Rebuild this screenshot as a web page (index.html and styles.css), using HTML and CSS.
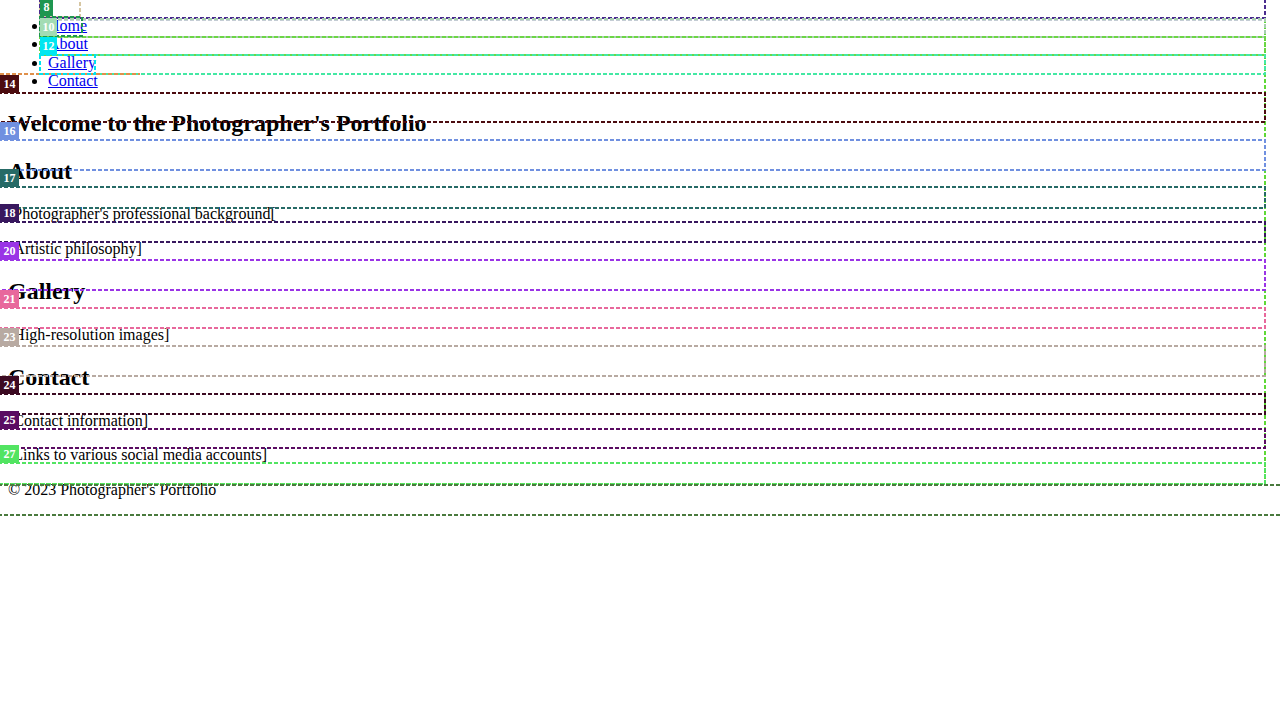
FILE: index.html
```html
<!DOCTYPE html>
<html lang="en">
<head>
<meta charset="utf-8">
<title>Photographer's Portfolio</title>
<link rel="stylesheet" href="styles.css">
</head>
<body>
<header class="site-header">
  <nav class="site-nav">
    <ul class="nav-list">
      <li><a href="#home">Home</a></li>
      <li><a href="#about">About</a></li>
      <li><a href="#gallery">Gallery</a></li>
      <li><a href="#contact">Contact</a></li>
    </ul>
  </nav>
</header>
<main>
  <section id="home">
    <h1 class="title">Welcome to the Photographer's Portfolio</h1>
  </section>
  <section id="about">
    <h2 class="heading">About</h2>
    <p class="text">[Photographer's professional background[</p>
    <p class="text">[Artistic philosophy]</p>
  </section>
  <section id="gallery">
    <h2 class="heading">Gallery</h2>
    <p class="text">[High-resolution images]</p>
  </section>
  <section id="contact">
    <h2 class="heading">Contact</h2>
    <p class="text">[Contact information]</p>
    <p class="text">[Links to various social media accounts]</p>
  </section>
</main>
<footer>
  <p class="text footer-text">&copy; 2023 Photographer's Portfolio</p>
</footer>

<div class="overlay" aria-hidden="true">
  <svg class="boxes" width="1280" height="720" viewBox="0 0 1280 720" fill="none" stroke-width="2" stroke-dasharray="4 2">
    <rect x="40" y="-30" width="40" height="47" stroke="#d6c6a2"/>
    <rect x="40" y="-30" width="1225" height="48" stroke="#4a2c8e"/>
    <path d="M40 20 H1265 V484 H-2" stroke="#5ed836"/>
    <line x1="40" y1="20" x2="1265" y2="20" stroke="#c4ccd4"/>
    <rect x="40" y="19" width="1225" height="18" stroke="#a8ceb0"/>
    <rect x="40" y="37" width="1225" height="18" stroke="#6cd644"/>
    <rect x="40" y="55" width="1225" height="19" stroke="#44e8a4"/>
    <line x1="0" y1="74" x2="140" y2="74" stroke="#e0904a"/>
    <rect x="40" y="17" width="42" height="19" stroke="#1e9650"/>
    <rect x="40" y="55" width="55" height="19" stroke="#00e2ee"/>
    <rect x="-2" y="93" width="1267" height="29" stroke="#4c0c10"/>
    <rect x="-2" y="140" width="1267" height="30" stroke="#7090e0"/>
    <rect x="-2" y="187" width="1267" height="21" stroke="#266a66"/>
    <rect x="-2" y="222" width="1267" height="20" stroke="#38185e"/>
    <rect x="-2" y="260" width="1267" height="30" stroke="#9a34e6"/>
    <rect x="-2" y="308" width="1267" height="20" stroke="#e8689c"/>
    <rect x="-2" y="346" width="1267" height="30" stroke="#b8aaa2"/>
    <rect x="-2" y="394" width="1267" height="20" stroke="#3c0a22"/>
    <rect x="-2" y="429" width="1267" height="19" stroke="#5a0c62"/>
    <rect x="-2" y="463" width="1267" height="21" stroke="#52e462"/>
    <rect x="-2" y="485" width="1286" height="30" stroke="#4a7a3e"/>
  </svg>
  <span class="tag tag-nav tag-8">8</span>
  <span class="tag tag-nav tag-10">10</span>
  <span class="tag tag-nav tag-12">12</span>
  <span class="tag tag-14">14</span>
  <span class="tag tag-16">16</span>
  <span class="tag tag-17">17</span>
  <span class="tag tag-18">18</span>
  <span class="tag tag-20">20</span>
  <span class="tag tag-21">21</span>
  <span class="tag tag-23">23</span>
  <span class="tag tag-24">24</span>
  <span class="tag tag-25">25</span>
  <span class="tag tag-27">27</span>
</div>
</body>
</html>
```

FILE: styles.css
```css
html {
  margin: 0;
  padding: 0;
}

body {
  margin: 0;
  padding: 17px 8px 8px;
  font-family: "Liberation Serif", "Times New Roman", serif;
  font-size: 16px;
  line-height: 18.4px;
  color: #000;
  background: #fff;
}

.site-header,
.site-nav {
  margin: 0;
  padding: 0;
}

.nav-list {
  margin: 0 0 19.92px;
  padding-left: 40px;
}

.nav-list li {
  height: 18.4px;
}

.title {
  font-size: 24px;
  line-height: 27.6px;
  margin: 19.92px 0;
}

.heading {
  font-size: 24px;
  line-height: 27.6px;
  margin: 19.92px 0;
}

.text {
  margin: 16px 0;
  line-height: 18.4px;
}

.footer-text {
  margin-top: 17px;
}

/* debug overlay */
.overlay {
  position: absolute;
  top: 0;
  left: 0;
  width: 1280px;
  height: 720px;
  pointer-events: none;
}

.boxes {
  position: absolute;
  top: 0;
  left: 0;
}

.tag {
  position: absolute;
  left: 0;
  height: 18px;
  line-height: 18px;
  padding: 0 3.5px;
  font-family: "Liberation Serif", serif;
  font-size: 12px;
  font-weight: bold;
  color: #fff;
}

.tag-nav {
  left: 40px;
  padding: 0 2.5px;
}

.tag-8 { top: -2px; background: #1e9650; padding: 0 3.5px; }
.tag-10 { top: 18px; background: #a3dcb4; }
.tag-12 { top: 37px; background: #00e6f0; }
.tag-14 { top: 75px; background: #4c0c10; }
.tag-16 { top: 122px; background: #7090e0; }
.tag-17 { top: 169px; background: #266a66; }
.tag-18 { top: 204px; background: #38185e; }
.tag-20 { top: 242px; background: #9a34e6; }
.tag-21 { top: 290px; background: #e8689c; }
.tag-23 { top: 328px; background: #b8aaa2; }
.tag-24 { top: 376px; background: #3c0a22; }
.tag-25 { top: 411px; background: #5a0c62; }
.tag-27 { top: 445px; background: #52e462; }
```
